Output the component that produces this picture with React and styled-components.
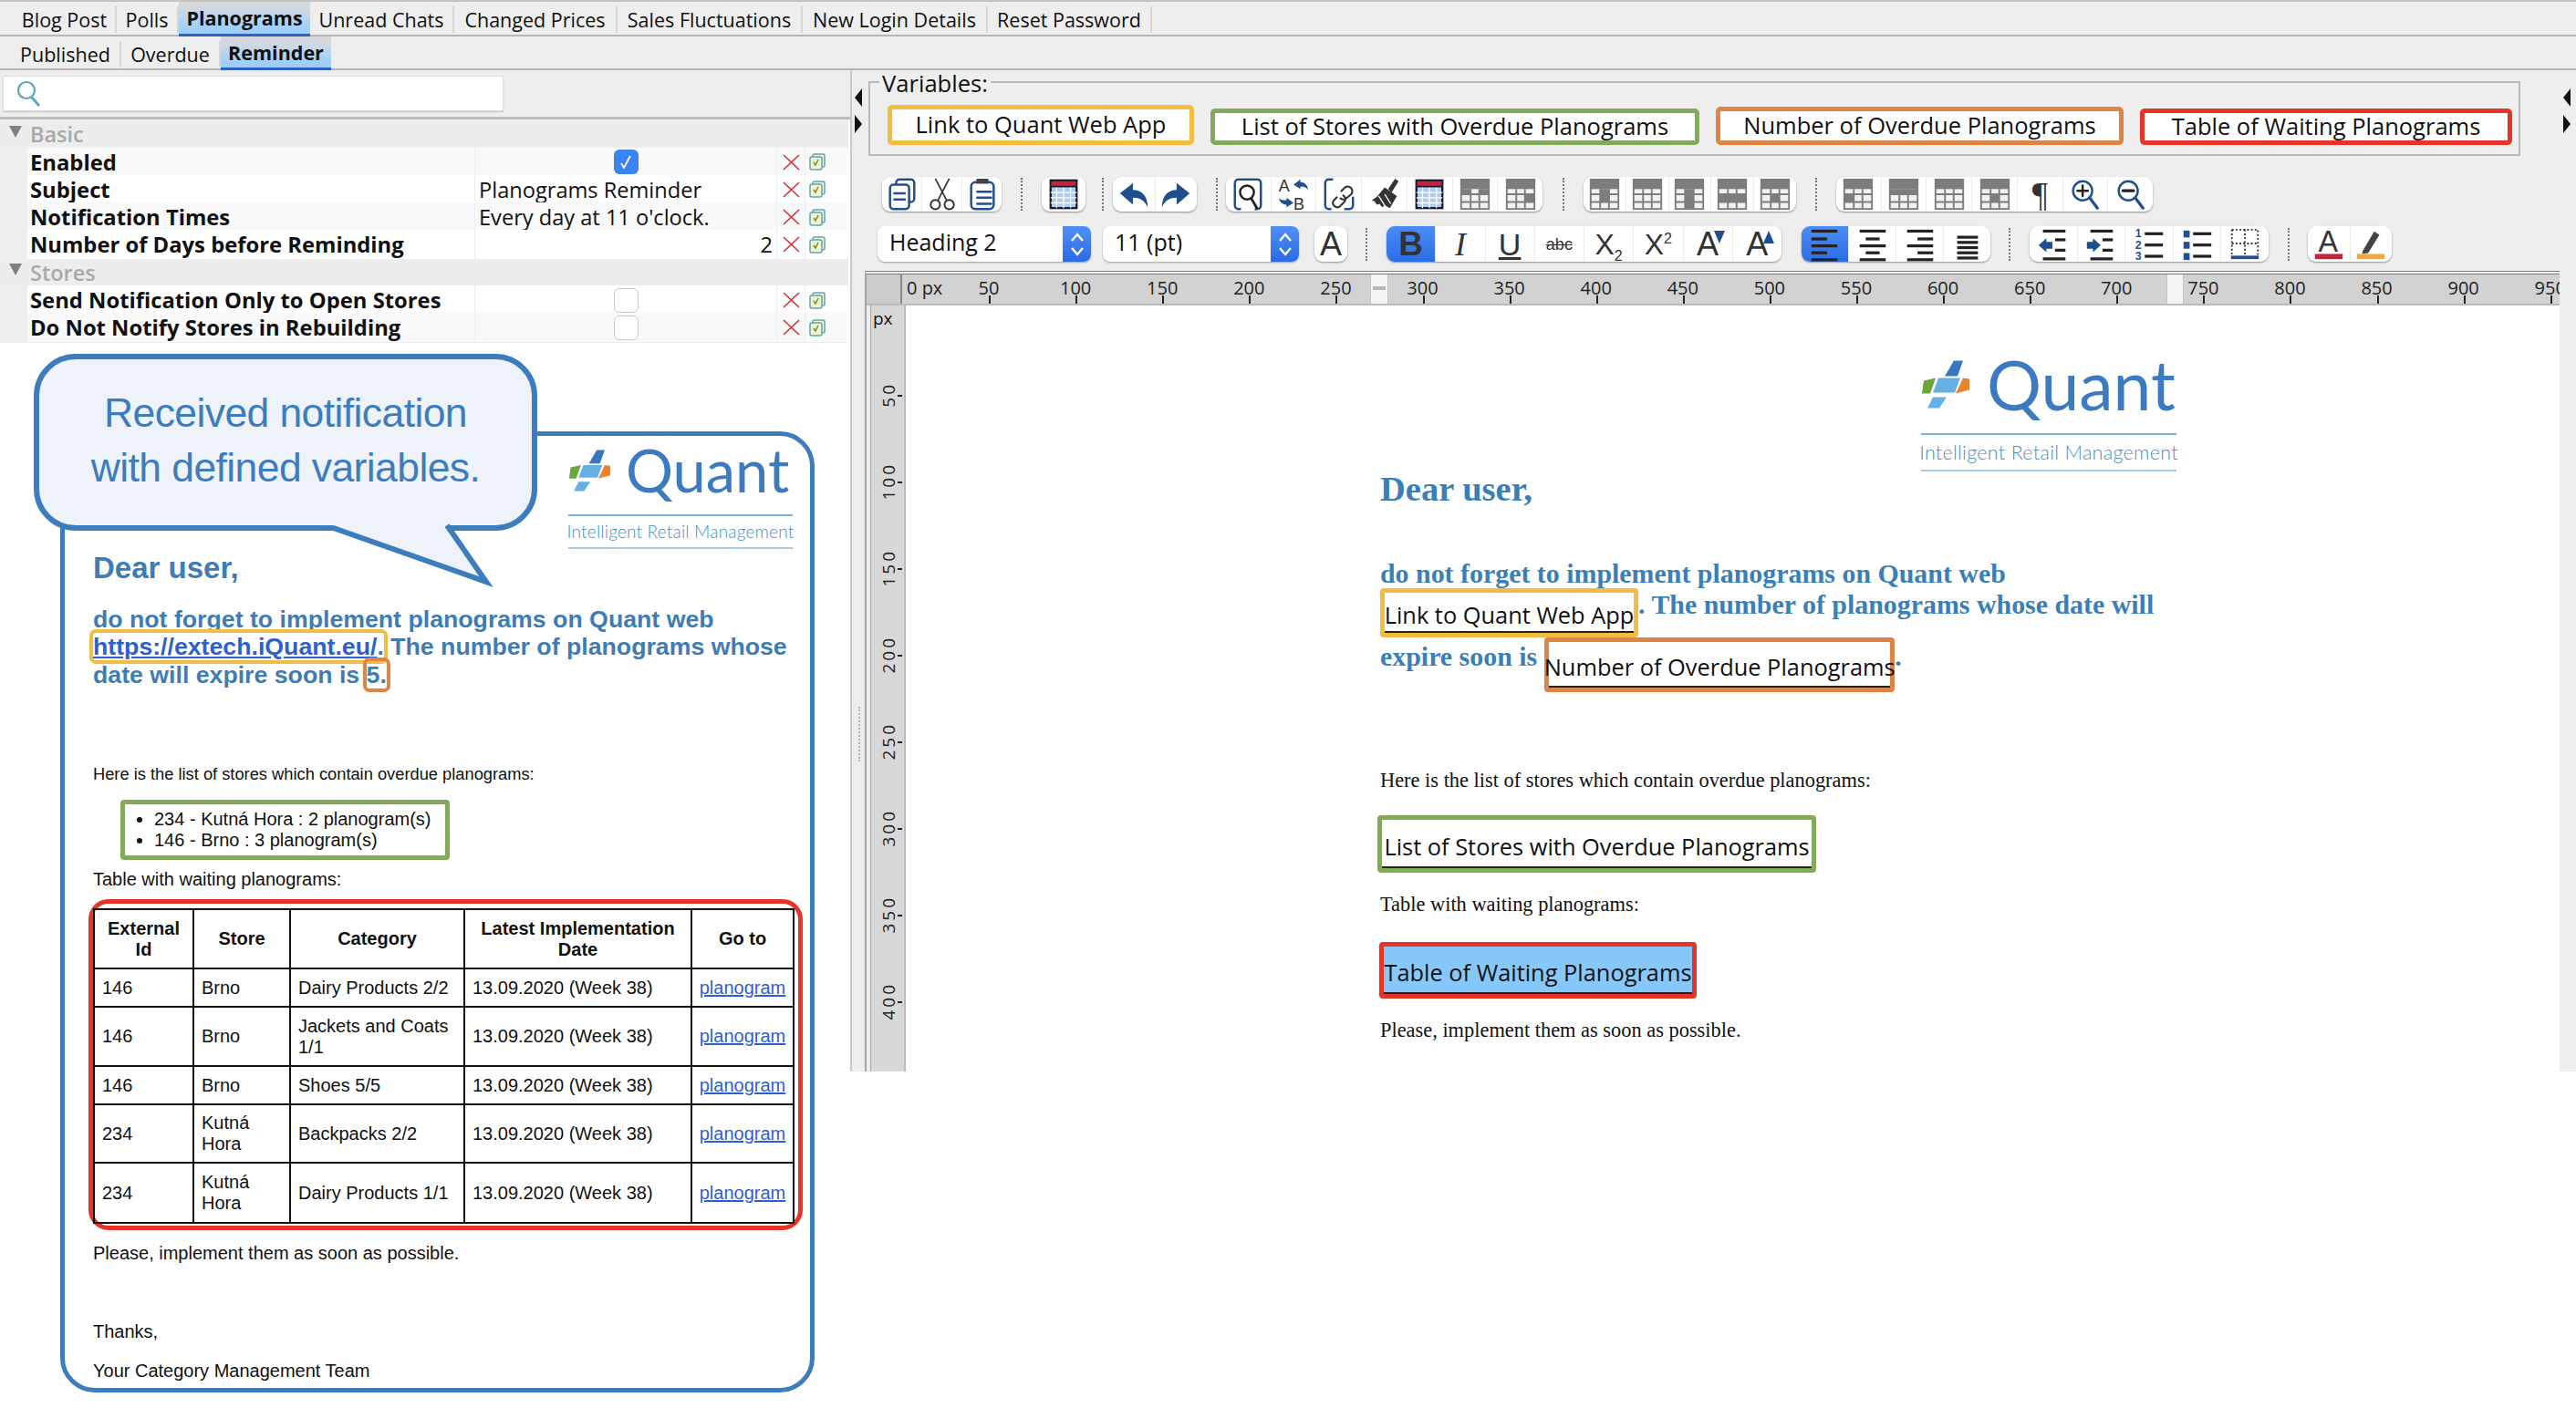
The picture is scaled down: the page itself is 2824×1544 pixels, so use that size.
import React from "react";
import styled, { createGlobalStyle, css } from "styled-components";

const UI = `"Open Sans", "Noto Sans", sans-serif`;
const SANS = `"Liberation Sans", Arial, sans-serif`;
const SERIF = `"Liberation Serif", "Times New Roman", serif`;
const LOGO = `Lato, "Open Sans", sans-serif`;
const NAVY = "#1f4f8f";
const CARD = "#3d7dbd";

const Global = createGlobalStyle`
  html, body { margin: 0; padding: 0; background: #fff; }
  body { width: 2824px; height: 1544px; overflow: hidden; font-family: ${UI}; color: #111; }
  * { box-sizing: border-box; }
`;

const TabBar = styled.div`
  display: flex; align-items: stretch; height: ${p => p.$h}px; padding-left: ${p => p.$pad}px;
  background: #eeeeee; border-bottom: 2px solid #b5b5b5; ${p => p.$top && "border-top: 2px solid #c4c4c4;"}
`;
const Tab = styled.div`
  display: flex; align-items: center; justify-content: center; width: ${p => p.$w}px; flex: none; font-size: 21.5px; white-space: nowrap;
  border-right: 2px solid #d6d6d6; margin: 5px 0 2px;
  ${p => p.$active && css`
    margin: 0 0 -2px; font-weight: 700; border-right: 0; border-bottom: 3px solid #2f62c4;
    background: linear-gradient(#d9d9d9 0%, #cfd8e2 25%, #a6d2f8 70%, #9bcdf8 100%);
  `}
`;

const Body = styled.div`display: flex; height: 1098px;`;
const LeftPane = styled.div`width: 934px; flex: none; background: #fff; border-right: 2px solid #c9c9c9;`;
const SearchStrip = styled.div`height: 54px; padding: 6px 0 0 3px; background: #eeeeee; border-bottom: 3px solid #bdbdbd;`;
const SearchBox = styled.div`
  width: 549px; height: 39px; background: #fff; border: 1px solid #dcdcdc; padding: 4px 0 0 12px;
  box-shadow: 0 1px 1px rgba(0,0,0,.15);
`;
const SectionHead = styled.div`
  display: flex; align-items: center; gap: 9px; height: 30.5px; width: 930px; padding: 2px 0 0 10px; background: #ededed;
  color: #a9a9a9; font-size: 23.5px; font-weight: 600;
`;
const Tri = styled.span`width: 0; height: 0; border-left: 7px solid transparent; border-right: 7px solid transparent; border-top: 13px solid #808080; margin-top: -6px;`;
const Row = styled.div`
  display: grid; grid-template-columns: 30px 490px 331px 31px 25px 21px; height: 30.3px; width: 928px; font-size: 23.6px;
  & > * { display: flex; align-items: center; border-bottom: 1px solid #eee; background: ${p => p.$alt ? "#f9f9f9" : "#fff"}; }
`;
const Stub = styled.div`&& { background: #eeeeee; }`;
const NameCell = styled.div`font-weight: 700; font-size: 23.8px; padding-left: 3px; white-space: nowrap;`;
const ValueCell = styled.div`padding: 0 4px 0 4px; border-left: 1px solid #eee; white-space: nowrap; justify-content: ${p => p.$j || "flex-start"};`;
const Mini = styled.div`justify-content: center; border-left: 1px solid #eee;`;
const Check = styled.span`
  width: 27px; height: 27px; border-radius: 6px; display: flex; align-items: center; justify-content: center;
  background: ${p => p.$on ? "#3b83f0" : "#fff"}; border: ${p => p.$on ? "0" : "1.5px solid #c9c9c9"};
`;
const PanelBody = styled.div`padding: 99px 0 0 66px;`;

const Card = styled.div`
  position: relative; width: 827px; background: #fff; border: 5px solid ${CARD}; border-radius: 38px;
  padding: 14px 19px 7px 31px; font-family: ${SANS}; font-size: 20px; line-height: 24px; color: #111;
`;
const Callout = styled.div`
  position: absolute; left: -34px; top: -90px; width: 552px; height: 194px; z-index: 2;
  background: #edf3f9; border: 6px solid ${CARD}; border-radius: 46px;
  display: flex; align-items: center; justify-content: center; text-align: center; padding-bottom: 4px;
  font-family: ${SANS}; font-size: 44.5px; line-height: 60px; color: ${CARD}; letter-spacing: -.6px;
`;
const CalloutTail = styled.svg`position: absolute; left: 312px; top: 182px; width: 190px; height: 70px; overflow: visible;`;

const LogoBlock = styled.div`width: ${p => p.$w}px; margin-left: ${p => p.$ml ? p.$ml + "px" : "auto"};`;
const LogoTop = styled.div`display: flex; align-items: center; gap: ${p => p.$gap}px; height: ${p => p.$h}px;`;
const LogoWord = styled.span`font-family: ${LOGO}; font-weight: 400; color: #3c7bc0; font-size: ${p => p.$s}px; line-height: 1;`;
const TagLine = styled.div`
  border-top: 2px solid #7fb0da; border-bottom: 2px solid #a9cbe8; margin-top: ${p => p.$mt}px; height: ${p => p.$h}px;
  display: flex; align-items: center; justify-content: center; font-family: ${LOGO}; font-weight: 300; font-size: ${p => p.$s}px;
  color: #4a8cc7; white-space: nowrap; letter-spacing: ${p => p.$ls}px;
`;

const MailHello = styled.div`font-size: 33px; line-height: 40px; font-weight: 700; color: #3f7cb3; margin-top: 1px;`;
const MailLead = styled.div`font-size: 26.7px; line-height: 30.5px; font-weight: 700; color: #3f7cb3; margin-top: 21px; white-space: nowrap;`;
const MailLink = styled.span`color: #2f5fcf; text-decoration: underline;`;
const Mark = styled.span`box-shadow: 0 0 0 4px ${p => p.$c}; border-radius: 3px;`;
const MailText = styled.div`margin-top: ${p => p.$mt}px; white-space: nowrap; ${p => p.$s && `font-size: ${p.$s}px;`}`;
const StoreBox = styled.div`
  width: 361px; margin: 16px 0 0 30px; padding: 5px 0 5px; border: 5px solid #82a95c; border-radius: 4px;
  ul { margin: 0; padding: 0 0 0 32px; line-height: 23px; }
`;
const TableBox = styled.div`width: 783px; margin: 10px 0 0 -5px; padding: 5px 0 2px; border: 5px solid #e53528; border-radius: 22px;`;
const Table = styled.table`
  width: 767px; border-collapse: collapse; table-layout: fixed; font-size: 20px; line-height: 23px;
  th, td { border: 2px solid #111; padding: 0 8px; text-align: left; }
  th { text-align: center; height: 65px; font-weight: 700; padding: 0 4px; }
  a { color: #2f5fcf; text-decoration: underline; }
  td:last-child { text-align: center; padding: 0; }
`;
const Tr = styled.tr`height: ${p => p.$h}px;`;

const Splitter = styled.div`width: 14px; flex: none; background: #eee; padding: 20px 0 0 3px; display: flex; flex-direction: column; gap: 9px;`;
const Arrow = styled.span`
  width: 0; height: 0; border-top: 10px solid transparent; border-bottom: 10px solid transparent;
  ${p => p.$dir === "l" ? "border-right: 8px solid #111;" : "border-left: 8px solid #111;"}
`;
const Grip = styled.div`width: 2px; height: 60px; margin: 620px 0 0 4px; border-left: 2px dotted #b5b5b5;`;
const Main = styled.div`width: 1858px; flex: none; background: #eee; display: flex; flex-direction: column;`;
const EdgeStrip = styled.div`flex: 1; background: #eee; padding: 20px 0 0 4px; display: flex; flex-direction: column; gap: 9px; overflow: hidden;`;

const Fieldset = styled.div`
  position: relative; width: 1811px; height: 82px; margin: 12px 0 0 4px; border: 2px solid #b9b9b9;
  display: flex; align-items: flex-end; gap: 18px; padding: 0 0 10px 19px;
`;
const Legend = styled.span`position: absolute; left: 10px; top: -14px; background: #eee; padding: 0 3px; font-size: 25.6px; line-height: 30px;`;
const VarButton = styled.div`
  display: flex; align-items: center; justify-content: center; width: ${p => p.$w}px; height: ${p => p.$h}px; padding-bottom: 3px;
  background: #fff; border: 5px solid ${p => p.$c}; border-radius: 5px; font-size: 25.5px; white-space: nowrap;
`;
const ToolRow = styled.div`display: flex; align-items: center; height: ${p => p.$h}px; margin-top: ${p => p.$mt}px; padding-left: ${p => p.$pl}px;`;
const Group = styled.div`
  display: flex; width: ${p => p.$w}px; height: 100%; background: #fff; border-radius: 9px;
  box-shadow: 0 1px 2px rgba(0,0,0,.4);
`;
const Tool = styled.div`
  flex: 1; min-width: 0; display: flex; align-items: center; justify-content: center; position: relative; color: #333;
  border-right: 1px solid #ececec; &:last-child { border-right: 0; }
  ${p => p.$active && "background: linear-gradient(#4b8df5, #2b6de6); border-radius: 9px 0 0 9px;"}
`;
const Sep = styled.span`
  flex: none; height: 36px; border-left: 2px ${p => p.$blank ? "solid transparent" : "dotted #777"}; margin: 0 ${p => p.$r}px 0 ${p => p.$l}px;
`;
const Combo = styled.div`
  display: flex; align-items: stretch; width: ${p => p.$w}px; height: 100%; margin-right: ${p => p.$mr}px; background: #fff;
  border-radius: 8px; overflow: hidden; box-shadow: 0 1px 2px rgba(0,0,0,.35);
`;
const ComboText = styled.span`flex: 1; padding-left: 13px; font-size: 25px; line-height: 35px; white-space: nowrap;`;
const Spinner = styled.span`width: 31px; display: flex; align-items: center; justify-content: center; background: linear-gradient(#4f90f6, #2a6be4);`;
const FmtLetter = styled.span`
  font-family: ${p => p.$serif ? SERIF : SANS}; font-size: ${p => p.$s || 36}px; line-height: 1; color: #333;
  font-weight: ${p => p.$b ? 700 : 400}; font-style: ${p => p.$i ? "italic" : "normal"};
  text-decoration: ${p => p.$u ? "underline" : p.$st ? "line-through" : "none"};
  sub, sup { font-size: 16px; line-height: 0; }
`;
const TriMark = styled.span`
  position: absolute; right: 8px; top: 5px; width: 0; height: 0; border-left: 6px solid transparent; border-right: 6px solid transparent;
  ${p => p.$up ? `border-bottom: 14px solid ${NAVY};` : `border-top: 14px solid ${NAVY};`}
`;

const Editor = styled.div`flex: 1; margin-top: 10px; border-top: 4px double #808080; border-left: 2px solid #a5a5a5; display: flex; flex-direction: column; min-height: 0;`;
const HRuler = styled.div`position: relative; display: flex; height: 34px; background: #d2d2d2; border-bottom: 2px solid #bbb; overflow: hidden; flex: none;`;
const Corner = styled.div`width: 39px; flex: none; background: #cccccc; border-right: 2px solid #888;`;
const HCell = styled.div`
  position: relative; flex: 0 0 ${p => p.$w}px; text-align: ${p => p.$left ? "left" : "center"}; font-size: 20px; line-height: 30px; padding-left: ${p => p.$left ? 5 : 0}px; color: #222; white-space: nowrap;
  ${p => !p.$left && `&::after { content: ""; position: absolute; left: 50%; bottom: 0; width: 2px; height: 9px; background: #222; }`}
`;
const RulerKnob = styled.span`
  position: absolute; top: 0; left: ${p => p.$x}px; width: ${p => p.$w}px; height: 100%; background: #f4f4f4; box-shadow: 0 0 1px #888;
  ${p => p.$dash && `&::after { content: ""; position: absolute; left: 2px; right: 2px; top: 13px; height: 4px; background: #b8b8b8; }`}
`;
const EditorBody = styled.div`flex: 1; display: flex; min-height: 0;`;
const VRuler = styled.div`width: 39px; flex: none; background: #d8d8d8; border-right: 2px solid #bbb; margin-left: 4px; overflow: hidden; border-left: 1px solid #aaa;`;
const PxCell = styled.div`height: 50px; font-size: 19px; line-height: 28px; padding-left: 2px;`;
const VCell = styled.div`
  position: relative; height: 95.1px; display: flex; align-items: center; justify-content: flex-start; padding-left: 7px;
  &::after { content: ""; position: absolute; right: 2px; top: 50%; width: 5px; height: 2px; background: #222; }
`;
const VLabel = styled.span`writing-mode: vertical-rl; transform: rotate(180deg); font-size: 19px; letter-spacing: 3px; line-height: 24px; color: #222;`;
const Page = styled.div`flex: 1; background: #fff; padding: 59px 0 0 520px; font-family: ${SERIF}; color: #111; min-width: 0; overflow: hidden;`;
const DocHello = styled.div`font-size: 38.5px; line-height: 40px; font-weight: 700; color: #3a7fb8; margin-top: -1px;`;
const DocLine = styled.div`
  display: flex; align-items: flex-start; height: ${p => p.$h}px; margin-top: ${p => p.$mt || 0}px;
  font-size: 29.9px; line-height: ${p => p.$lh || 36}px; font-weight: 700; color: #3a7fb8; white-space: nowrap;
`;
const InlineVar = styled.span`
  display: flex; align-items: center; justify-content: center; height: ${p => p.$h}px; padding: 4px 0 0; margin: ${p => p.$m || 0};
  width: ${p => p.$w}px; background: ${p => p.$bg || "#fff"};
  border: 5px solid ${p => p.$c}; border-radius: 4px; box-shadow: inset 0 -2px 0 #222;
  font-family: ${UI}; font-weight: 400; font-size: 25.4px; line-height: 30px; color: #111; white-space: nowrap; flex: none;
`;
const DocText = styled.div`font-size: 22.4px; line-height: 28px; margin-top: ${p => p.$mt}px; white-space: nowrap;`;

const S = { fill: "none", stroke: NAVY, strokeWidth: 2.6, strokeLinecap: "round", strokeLinejoin: "round" };
const Ic = ({ children, w = 38, h = 38 }) => <svg width={w} height={h} viewBox="0 0 40 40">{children}</svg>;

const grayTable = (dark = [], extra = null) => (
  <Ic>
    <rect x="4" y="3" width="32" height="34" fill="#f1f1f1" stroke="#7d7d7d" strokeWidth="2" />
    <rect x="4" y="3" width="32" height="11" fill="#7d7d7d" />
    {dark.map((r, i) => <rect key={i} x={r[0]} y={r[1]} width={r[2]} height={r[3]} fill="#7d7d7d" />)}
    <path d="M4 20h32M4 29h32M15 14v23M25 14v23" stroke="#7d7d7d" strokeWidth="2" fill="none" />
    {extra}
  </Ic>
);
const Bars = ({ rows }) => (
  <Ic>{rows.map((r, i) => <rect key={i} x={r[0]} y={r[1]} width={r[2]} height="3.4" fill={r[3] || "#222"} />)}</Ic>
);
const gridIcon = (
  <Ic>
    <rect x="5" y="4" width="30" height="32" fill="#aecbf0" stroke="#15152a" strokeWidth="2.4" />
    <rect x="6" y="5" width="28" height="6" fill="#c4233a" />
    <path d="M5 11h30M5 18h30M5 24h30M5 30h30M12 11v25M20 11v25M28 11v25" stroke="#fff" strokeWidth="1.4" fill="none" />
    <path d="M5 11h30" stroke="#15152a" strokeWidth="2" />
  </Ic>
);
const magnifier = inner => (
  <Ic><circle cx="17" cy="16" r="11" {...S} /><path d="M25 24l9 12" {...S} strokeWidth="3.4" />{inner}</Ic>
);

const copyIcon = (
  <Ic><rect x="13" y="3" width="21" height="26" rx="4" {...S} /><rect x="6" y="9" width="22" height="28" rx="4" {...S} fill="#fff" /><path d="M11 19h12M11 26h12" {...S} /></Ic>
);
const cutIcon = (
  <Ic><path d="M12 2l13 25M28 2L15 27" fill="none" stroke="#333" strokeWidth="1.8" /><circle cx="12" cy="32" r="5.4" fill="none" stroke="#333" strokeWidth="2" /><circle cx="28" cy="32" r="5.4" fill="none" stroke="#333" strokeWidth="2" /></Ic>
);
const pasteIcon = (
  <Ic><rect x="7" y="6" width="26" height="31" rx="5" {...S} /><rect x="13" y="2" width="14" height="6" rx="1" fill="#444" /><path d="M14 17h16M14 24h16M14 31h16" {...S} /></Ic>
);
const undoIcon = <Ic><path d="M4 19L19 7v8c10 0 17 7 17 20-4-8-9-11-17-11v8z" fill={NAVY} /></Ic>;
const redoIcon = <Ic><path d="M36 19L21 7v8c-10 0-17 7-17 20 4-8 9-11 17-11v8z" fill={NAVY} /></Ic>;
const findIcon = (
  <Ic><path d="M11 37H9a4 4 0 0 1-4-4V7a4 4 0 0 1 4-4h22a4 4 0 0 1 4 4v26a4 4 0 0 1-4 4h-2" {...S} /><circle cx="19" cy="18" r="8" fill="none" stroke="#222" strokeWidth="2.6" /><path d="M24 25l7 12" stroke="#222" strokeWidth="3" /></Ic>
);
const replaceIcon = (
  <Ic>
    <text x="3" y="17" fontFamily={SANS} fontSize="19" fill="#333">A</text>
    <text x="20" y="38" fontFamily={SANS} fontSize="19" fill="#333">B</text>
    <path d="M20 9l8-6v3c5 0 8 3 9 9-2-3-5-4-9-4v3z" fill={NAVY} />
    <path d="M20 30l-8 5v-3c-5 0-8-3-9-8 2 3 5 3 9 3v-3z" fill={NAVY} />
  </Ic>
);
const linkIcon = (
  <Ic><path d="M10 37H8a4 4 0 0 1-4-4V7a4 4 0 0 1 4-4h4M27 37h5a4 4 0 0 0 4-4V24" {...S} /><path d="M18 23l-4 4a5 5 0 0 0 7 7l5-5a5 5 0 0 0-2-8M22 17l4-4a5 5 0 0 1 8 7l-6 5a5 5 0 0 1-7-1" fill="none" stroke="#333" strokeWidth="2.2" /></Ic>
);
const broomIcon = (
  <Ic><path d="M24 14L32 2l4 3-8 13z" fill="#333" /><path d="M20 12l14 10-8 14-6-3-3 2-3-4-3 1-3-4-3-1 6-4z" fill="#333" /><path d="M13 22l9 14M20 20l7 11" stroke={"#fff"} strokeWidth="1.4" /></Ic>
);
const pilcrow = <FmtLetter $serif $s={38}>¶</FmtLetter>;
const zoomIn = magnifier(<path d="M11 16h12M17 10v12" {...S} stroke="#222" />);
const zoomOut = magnifier(<path d="M11 16h12" {...S} stroke="#222" strokeWidth="3.4" />);

const alignRows = {
  left: [[4, 3, 30], [4, 12, 18], [4, 20, 30], [4, 28, 18], [4, 36, 30]],
  center: [[5, 3, 30], [12, 12, 16], [5, 20, 30], [12, 28, 16], [5, 36, 30]],
  right: [[5, 3, 30], [17, 12, 18], [5, 20, 30], [17, 28, 18], [5, 36, 30]],
  justify: [[8, 10, 24], [8, 16, 24], [8, 22, 24], [8, 28, 24], [8, 34, 24]],
};
const indentIcon = flip => (
  <Ic>
    <rect x="8" y="3" width="26" height="3.4" fill="#222" />
    <rect x="8" y="35" width="26" height="3.4" fill="#222" />
    <rect x="22" y="13" width="12" height="3.4" fill="#222" />
    <rect x="22" y="25" width="12" height="3.4" fill="#222" />
    <path d={flip ? "M20 21l-9-8v4H4v8h7v4z" : "M3 21l9-8v4h7v8h-7v4z"} fill={NAVY} />
  </Ic>
);
const numList = (
  <Ic>
    {["1", "2", "3"].map((n, i) => <text key={n} x="4" y={12 + i * 13} fontFamily={SANS} fontWeight="700" fontSize="13" fill={NAVY}>{n}</text>)}
    {[6, 19, 32].map(y => <rect key={y} x="15" y={y} width="21" height="3.4" fill="#222" />)}
  </Ic>
);
const bulList = (
  <Ic>
    {[4, 17, 30].map(y => <rect key={y} x="4" y={y} width="7" height="8" fill={NAVY} />)}
    {[6, 19, 32].map(y => <rect key={y} x="15" y={y} width="21" height="3.4" fill="#222" />)}
  </Ic>
);
const borderIcon = (
  <Ic><path d="M5 3h30v31M5 3v31M5 19h30M20 3v31" fill="none" stroke="#333" strokeWidth="2" strokeDasharray="2 2.4" /><rect x="4" y="33" width="32" height="4" fill={NAVY} /></Ic>
);
const fontColor = (
  <Ic><text x="8" y="28" fontFamily={SANS} fontSize="34" fill="#333">A</text><rect x="4" y="31" width="32" height="6" fill="#c4233a" /></Ic>
);
const hiliter = (
  <Ic><path d="M11 27l13-22 6 4-13 21-7 1z" fill="#444" /><rect x="4" y="31" width="32" height="6" fill="#f2a93b" /></Ic>
);

const toolbarOne = [
  { w: 131, items: [copyIcon, cutIcon, pasteIcon] }, { l: 21, r: 21 },
  { w: 48, items: [gridIcon] }, { l: 18, r: 10 },
  { w: 92, items: [undoIcon, redoIcon] }, { l: 21, r: 9 },
  { w: 347, items: [findIcon, replaceIcon, linkIcon, broomIcon, gridIcon, grayTable([[4, 14, 11, 6], [25, 14, 11, 6]]), grayTable([[25, 20, 11, 9]])] }, { l: 22, r: 21 },
  { w: 233, items: [grayTable([[15, 14, 11, 15]]), grayTable(), grayTable([[15, 14, 10, 23]]), grayTable([[4, 20, 32, 9]]), grayTable([[15, 20, 10, 9]])] }, { l: 21, r: 21 },
  { w: 347, items: [grayTable([[4, 20, 11, 9]]), grayTable([[4, 14, 32, 6]]), grayTable([[25, 3, 11, 11]]), grayTable([[15, 20, 10, 9]]), pilcrow, zoomIn, zoomOut] },
];

const toolbarTwo = [
  { w: 433, items: [
    { n: <FmtLetter $b $s={37}>B</FmtLetter>, a: true }, { n: <FmtLetter $serif $i $s={36}>I</FmtLetter> },
    { n: <FmtLetter $u $s={34}>U</FmtLetter> }, { n: <FmtLetter $st $s={18}>abc</FmtLetter> },
    { n: <FmtLetter $s={32}>X<sub>2</sub></FmtLetter> }, { n: <FmtLetter $s={32}>X<sup>2</sup></FmtLetter> },
    { n: <><FmtLetter $s={36}>A</FmtLetter><TriMark /></> }, { n: <><FmtLetter $s={36}>A</FmtLetter><TriMark $up /></> },
  ] }, { l: 10, r: 10, blank: true },
  { w: 207, items: [{ n: <Bars rows={alignRows.left} />, a: true }, { n: <Bars rows={alignRows.center} /> }, { n: <Bars rows={alignRows.right} /> }, { n: <Bars rows={alignRows.justify} /> }] },
  { l: 20, r: 21 },
  { w: 262, items: [{ n: indentIcon(false) }, { n: indentIcon(true) }, { n: numList }, { n: bulList }, { n: borderIcon }] }, { l: 21, r: 20 },
  { w: 92, items: [{ n: fontColor }, { n: hiliter }] },
];

const QuantMark = ({ s }) => (
  <svg width={s} height={s} viewBox="0 0 53 52">
    <path d="M36 0h10l-6 17H26z" fill="#3776c0" />
    <path d="M19 19h24l-6 16H13z" fill="#66b0e6" />
    <path d="M3 22l13-3-6 17H1z" fill="#6aa63c" />
    <path d="M46 19l7 1v12l-15 4z" fill="#e8842c" />
    <path d="M13 40h15l-8 12H7z" fill="#66b0e6" />
  </svg>
);

const ChevUD = () => (
  <svg width="18" height="30" viewBox="0 0 18 30" fill="none" stroke="#fff" strokeWidth="2.4">
    <path d="M3 11l6-7 6 7M3 19l6 7 6-7" />
  </svg>
);
const RedX = () => <svg width="21" height="18" viewBox="0 0 21 18"><path d="M2 1l17 16M19 1L2 17" stroke="#d2353a" strokeWidth="1.7" fill="none" /></svg>;
const CopyMini = () => (
  <svg width="21" height="19" viewBox="0 0 21 19">
    <rect x="6" y="1" width="13" height="14" rx="2" fill="#f4f3d8" stroke="#5fa6ad" strokeWidth="1.5" />
    <rect x="3" y="4" width="13" height="14" rx="2" fill="#f0f2d2" stroke="#5fa6ad" strokeWidth="1.5" />
    <path d="M7 10l2 3 3-6" stroke="#7d8f2c" strokeWidth="1.6" fill="none" />
  </svg>
);

const props = [
  { sec: "Basic", rows: [
    { name: "Enabled", check: true, alt: true },
    { name: "Subject", value: "Planograms Reminder" },
    { name: "Notification Times", value: "Every day at 11 o'clock.", alt: true },
    { name: "Number of Days before Reminding", value: "2", right: true },
  ] },
  { sec: "Stores", rows: [
    { name: "Send Notification Only to Open Stores", check: false },
    { name: "Do Not Notify Stores in Rebuilding", check: false, alt: true },
  ] },
];

const tableRows = [
  ["146", "Brno", "Dairy Products 2/2", 42],
  ["146", "Brno", "Jackets and Coats 1/1", 65],
  ["146", "Brno", "Shoes 5/5", 42],
  ["234", "Kutná Hora", "Backpacks 2/2", 64],
  ["234", "Kutná Hora", "Dairy Products 1/1", 66],
];

const hMarks = [];
for (let i = 50; i <= 950; i += 50) hMarks.push(i);
const vMarks = [50, 100, 150, 200, 250, 300, 350, 400];

const renderTools = (arr, isTwo) => arr.map((g, i) =>
  g.items ? (
    <Group key={i} $w={g.w}>
      {g.items.map((it, j) => isTwo
        ? <Tool key={j} $active={it.a}>{it.n}</Tool>
        : <Tool key={j}>{it}</Tool>)}
    </Group>
  ) : <Sep key={i} $l={g.l} $r={g.r} $blank={g.blank} />
);

export default function App() {
  return (
    <>
      <Global />
      <TabBar $h={40} $pad={15} $top>
        <Tab $w={113}>Blog Post</Tab><Tab $w={68}>Polls</Tab><Tab $active $w={144}>Planograms</Tab>
        <Tab $w={158}>Unread Chats</Tab><Tab $w={179}>Changed Prices</Tab><Tab $w={203}>Sales Fluctuations</Tab>
        <Tab $w={203}>New Login Details</Tab><Tab $w={180}>Reset Password</Tab>
      </TabBar>
      <TabBar $h={37} $pad={12}>
        <Tab $w={121}>Published</Tab><Tab $w={109}>Overdue</Tab><Tab $active $w={121}>Reminder</Tab>
      </TabBar>
      <Body>
        <LeftPane>
          <SearchStrip>
            <SearchBox>
              <svg width="30" height="30" viewBox="0 0 30 30" fill="none" stroke="#5aa9bb" strokeWidth="2.2"><circle cx="13" cy="11" r="9" /><path d="M19 19l8 9" strokeWidth="3" /></svg>
            </SearchBox>
          </SearchStrip>
          {props.map(s => (
            <React.Fragment key={s.sec}>
              <SectionHead><Tri />{s.sec}</SectionHead>
              {s.rows.map(r => (
                <Row key={r.name} $alt={r.alt}>
                  <Stub />
                  <NameCell>{r.name}</NameCell>
                  {r.value !== undefined
                    ? <ValueCell $j={r.right ? "flex-end" : undefined}>{r.value}</ValueCell>
                    : <ValueCell $j="center">
                        <Check $on={r.check}>{r.check && <svg width="16" height="18" viewBox="0 0 16 18" fill="none" stroke="#fff" strokeWidth="1.8"><path d="M3 10l3 5 7-13" /></svg>}</Check>
                      </ValueCell>}
                  <Mini><RedX /></Mini>
                  <Mini><CopyMini /></Mini>
                  <div />
                </Row>
              ))}
            </React.Fragment>
          ))}
          <PanelBody>
            <Card>
              <Callout>
                <div>Received notification<br />with defined variables.</div>
                <CalloutTail viewBox="0 0 190 70">
                  <path d="M2 0L178 62 135 0" fill="#edf3f9" stroke={CARD} strokeWidth="6" strokeLinejoin="miter" />
                  <path d="M0 -3H133" stroke="#edf3f9" strokeWidth="6" />
                </CalloutTail>
              </Callout>
              <LogoBlock $w={246}>
                <LogoTop $gap={17} $h={48}><QuantMark s={46} /><LogoWord $s={65}>Quant</LogoWord></LogoTop>
                <TagLine $mt={24} $h={38} $s={19} $ls={0.2}>Intelligent Retail Management</TagLine>
              </LogoBlock>
              <MailHello>Dear user,</MailHello>
              <MailLead>
                do not forget to implement planograms on Quant web<br />
                <Mark $c="#f3bd42"><MailLink>https://extech.iQuant.eu/</MailLink>.</Mark> The number of planograms whose<br />
                date will expire soon is <Mark $c="#de8446">5.</Mark>
              </MailLead>
              <MailText $mt={82} $s={18.3}>Here is the list of stores which contain overdue planograms:</MailText>
              <StoreBox>
                <ul>
                  <li>234 - Kutná Hora : 2 planogram(s)</li>
                  <li>146 - Brno : 3 planogram(s)</li>
                </ul>
              </StoreBox>
              <MailText $mt={9}>Table with waiting planograms:</MailText>
              <TableBox>
                <Table>
                  <colgroup><col width="109" /><col width="106" /><col width="191" /><col width="249" /><col width="112" /></colgroup>
                  <thead>
                    <tr><th>External Id</th><th>Store</th><th>Category</th><th>Latest Implementation Date</th><th>Go to</th></tr>
                  </thead>
                  <tbody>
                    {tableRows.map((r, i) => (
                      <Tr key={i} $h={r[3]}>
                        <td>{r[0]}</td><td>{r[1]}</td><td>{r[2]}</td><td>13.09.2020 (Week 38)</td><td><a href="#p">planogram</a></td>
                      </Tr>
                    ))}
                  </tbody>
                </Table>
              </TableBox>
              <MailText $mt={13}>Please, implement them as soon as possible.</MailText>
              <MailText $mt={62}>Thanks,</MailText>
              <MailText $mt={19}>Your Category Management Team</MailText>
            </Card>
          </PanelBody>
        </LeftPane>
        <Splitter>
          <Arrow $dir="l" /><Arrow $dir="r" />
          <Grip />
        </Splitter>
        <Main>
          <Fieldset>
            <Legend>Variables:</Legend>
            <VarButton $w={336} $h={44} $c="#f3bd42">Link to Quant Web App</VarButton>
            <VarButton $w={536} $h={40} $c="#82a95c">List of Stores with Overdue Planograms</VarButton>
            <VarButton $w={447} $h={42} $c="#de8446">Number of Overdue Planograms</VarButton>
            <VarButton $w={408} $h={40} $c="#e53528">Table of Waiting Planograms</VarButton>
          </Fieldset>
          <ToolRow $h={38} $mt={23} $pl={19}>{renderTools(toolbarOne, false)}</ToolRow>
          <ToolRow $h={39} $mt={16} $pl={14}>
            <Combo $w={234} $mr={13}><ComboText>Heading 2</ComboText><Spinner><ChevUD /></Spinner></Combo>
            <Combo $w={215} $mr={17}><ComboText>11 (pt)</ComboText><Spinner><ChevUD /></Spinner></Combo>
            <Group $w={36}><Tool><FmtLetter $s={36}>A</FmtLetter></Tool></Group>
            <Sep $l={20} $r={21} />
            {renderTools(toolbarTwo, true)}
          </ToolRow>
          <Editor>
            <HRuler>
              <Corner />
              <HCell $left $w={47.5}>0 px</HCell>
              {hMarks.map(m => <HCell key={m} $w={95.1}>{m}</HCell>)}
              <RulerKnob $x={553} $w={18} $dash />
              <RulerKnob $x={1426} $w={17} />
            </HRuler>
            <EditorBody>
              <VRuler>
                <PxCell>px</PxCell>
                {vMarks.map(m => <VCell key={m}><VLabel>{m}</VLabel></VCell>)}
              </VRuler>
              <Page>
                <LogoBlock $w={280} $ml={593}>
                  <LogoTop $gap={19} $h={54}><QuantMark s={53} /><LogoWord $s={75}>Quant</LogoWord></LogoTop>
                  <TagLine $mt={27} $h={42} $s={21.5} $ls={0.3}>Intelligent Retail Management</TagLine>
                </LogoBlock>
                <DocHello>Dear user,</DocHello>
                <DocLine $h={34} $mt={55}>do not forget to implement planograms on Quant web</DocLine>
                <DocLine $h={54}>
                  <InlineVar $w={283} $h={54} $c="#f3bd42">Link to Quant Web App</InlineVar>
                  <span>. The number of planograms whose date will</span>
                </DocLine>
                <DocLine $h={60} $lh={42}>
                  <span>expire soon is</span>
                  <InlineVar $w={384} $h={60} $c="#de8446" $m="0 0 0 8px">Number of Overdue Planograms</InlineVar>
                  <span>.</span>
                </DocLine>
                <DocText $mt={83}>Here is the list of stores which contain overdue planograms:</DocText>
                <InlineVar $w={481} $h={63} $c="#82a95c" $m="24px 0 0 -3px">List of Stores with Overdue Planograms</InlineVar>
                <DocText $mt={21}>Table with waiting planograms:</DocText>
                <InlineVar $w={348} $h={62} $c="#e53528" $bg="#87c8fb" $m="27px 0 0 -1px">Table of Waiting Planograms</InlineVar>
                <DocText $mt={21}>Please, implement them as soon as possible.</DocText>
              </Page>
            </EditorBody>
          </Editor>
        </Main>
        <EdgeStrip><Arrow $dir="l" /><Arrow $dir="r" /></EdgeStrip>
      </Body>
    </>
  );
}
